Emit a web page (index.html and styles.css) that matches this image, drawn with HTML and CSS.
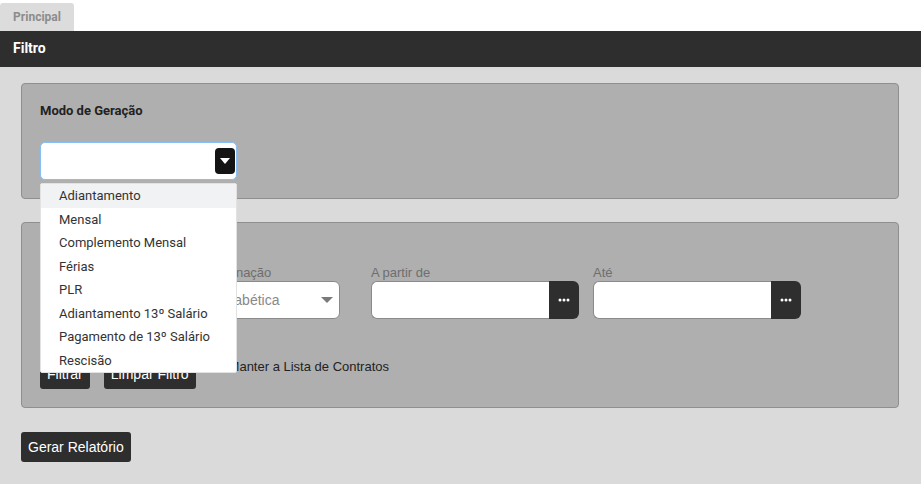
FILE: index.html
```html
<!DOCTYPE html>
<html lang="pt-BR">
<head>
    <meta charset="UTF-8">
    <meta name="viewport" content="width=device-width, initial-scale=1.0">
    <title>Relatório - Filtro</title>
    <link rel="stylesheet" href="styles.css">
</head>
<body>
    <div class="tabs">
        <div class="tab">Principal</div>
    </div>
    <div class="titlebar">Filtro</div>
    <div class="content">
        <section class="panel">
            <h2 class="panel-title">Modo de Geração</h2>
            <div class="combo">
                <div class="combo-box">
                    <span class="combo-btn">
                        <svg width="10" height="6" viewBox="0 0 10 6"><path d="M0 0 L10 0 L5 6 Z" fill="#fff"/></svg>
                    </span>
                </div>
                <ul class="combo-list">
                    <li class="active">Adiantamento</li>
                    <li>Mensal</li>
                    <li>Complemento Mensal</li>
                    <li>Férias</li>
                    <li>PLR</li>
                    <li>Adiantamento 13º Salário</li>
                    <li>Pagamento de 13º Salário</li>
                    <li>Rescisão</li>
                </ul>
            </div>
        </section>

        <section class="panel">
            <div class="panel-title"></div>
            <div class="fields">
                <div class="field field-contract">
                    <label></label>
                    <div class="input"></div>
                </div>
                <div class="field field-order">
                    <label>Ordenação</label>
                    <div class="input select">
                        <span>Alfabética</span>
                        <svg width="12" height="6" viewBox="0 0 12 6"><path d="M0 0 L12 0 L6 6 Z" fill="#7a7a7a"/></svg>
                    </div>
                </div>
                <div class="field field-date">
                    <label>A partir de</label>
                    <div class="date">
                        <div class="input"></div>
                        <span class="date-btn">
                            <svg width="12" height="4" viewBox="0 0 12 4"><circle cx="2" cy="2" r="1.5" fill="#fff"/><circle cx="6" cy="2" r="1.5" fill="#fff"/><circle cx="10" cy="2" r="1.5" fill="#fff"/></svg>
                        </span>
                    </div>
                </div>
                <div class="field field-date">
                    <label>Até</label>
                    <div class="date">
                        <div class="input"></div>
                        <span class="date-btn">
                            <svg width="12" height="4" viewBox="0 0 12 4"><circle cx="2" cy="2" r="1.5" fill="#fff"/><circle cx="6" cy="2" r="1.5" fill="#fff"/><circle cx="10" cy="2" r="1.5" fill="#fff"/></svg>
                        </span>
                    </div>
                </div>
            </div>
            <div class="actions">
                <button class="b">Filtrar</button>
                <button class="b">Limpar Filtro</button>
                <span class="check"></span>
                <span class="check-label">Manter a Lista de Contratos</span>
            </div>
        </section>

        <button class="b b-report">Gerar Relatório</button>
    </div>
</body>
</html>
```

FILE: styles.css
```css
html, body {
    margin: 0;
    height: 100%;
}
body {
    background-color: #dadada;
    font-family: "Liberation Sans", Arial, sans-serif;
    color: #222;
}
.tabs {
    background-color: #fff;
    padding-top: 3px;
    height: 28px;
}
.tab {
    width: 74px;
    height: 28px;
    line-height: 29px;
    text-align: center;
    background-color: #dcdcdc;
    border-radius: 3px 3px 0 0;
    font-family: Roboto, sans-serif;
    font-weight: bold;
    font-size: 12px;
    color: #8c8c8c;
}
.titlebar {
    background-color: #2e2e2e;
    color: #fff;
    height: 36px;
    line-height: 35px;
    padding-left: 13px;
    font-family: Roboto, sans-serif;
    font-weight: bold;
    font-size: 14px;
}
.content {
    padding: 16px 22px 0 21px;
}
.panel {
    background-color: #afafaf;
    border: 1px solid #8f8f8f;
    border-radius: 4px;
    padding: 18px;
    margin-bottom: 23px;
}
.panel + .panel {
    margin-bottom: 24px;
}
.panel-title {
    margin: 0;
    height: 18px;
    font-family: Roboto, sans-serif;
    font-size: 13px;
    font-weight: bold;
    line-height: 18px;
    color: #222;
}
.combo {
    position: relative;
    width: 197px;
    margin-top: 22px;
}
.combo-box {
    height: 38px;
    box-sizing: border-box;
    background: #fff;
    border: 1px solid #86bff7;
    border-radius: 5px;
    display: flex;
    justify-content: flex-end;
    align-items: center;
    padding-right: 1px;
}
.combo-btn {
    width: 20px;
    height: 26px;
    background: #141414;
    border-radius: 4px;
    display: flex;
    align-items: center;
    justify-content: center;
}
.combo-list {
    position: absolute;
    top: 41px;
    left: 0;
    width: 197px;
    box-sizing: border-box;
    margin: 0;
    padding: 0;
    list-style: none;
    background: #fff;
    border: 1px solid #e2e2e2;
    border-radius: 2px;
    z-index: 5;
}
.combo-list li {
    height: 23.5px;
    line-height: 23.5px;
    padding-left: 18px;
    font-family: Roboto, sans-serif;
    font-size: 13px;
    color: #333;
}
.combo-list li.active {
    background-color: #f1f2f4;
}
.fields {
    display: flex;
    gap: 14px;
    margin-top: 6px;
}
.field label {
    display: block;
    height: 16px;
    line-height: 16px;
    font-size: 13px;
    color: #6e6e6e;
}
.field-contract {
    width: 153px;
}
.field-order {
    width: 133px;
    margin-right: 17px;
}
.field-date {
    width: 208px;
}
.input {
    height: 38px;
    box-sizing: border-box;
    background: #fff;
    border: 1px solid #8a8a8a;
    border-radius: 6px;
}
.select {
    display: flex;
    align-items: center;
    justify-content: space-between;
    padding: 0 6px 0 10px;
    font-size: 14px;
    color: #888;
}
.date {
    display: flex;
}
.date .input {
    flex: 1;
    border-radius: 6px 0 0 6px;
    border-right: none;
}
.date-btn {
    width: 30px;
    height: 38px;
    background: #2e2e2e;
    border-radius: 0 6px 6px 0;
    display: flex;
    align-items: center;
    justify-content: center;
}
.actions {
    display: flex;
    align-items: flex-start;
    margin-top: 39px;
}
.b {
    height: 31px;
    padding: 0 7px;
    background-color: #2e2e2e;
    color: #fff;
    border: none;
    border-radius: 3px;
    font-family: "Liberation Sans", Arial, sans-serif;
    font-size: 14px;
    margin-right: 14px;
}
.check {
    width: 12px;
    height: 12px;
    box-sizing: border-box;
    background: #fff;
    border: 1px solid #e6e6e6;
    border-radius: 2px;
    margin: 2px 7px 0 0;
}
.check-label {
    font-size: 13px;
    line-height: 18px;
    color: #222;
}
.b-report {
    height: 30px;
    margin: 0;
}
```
